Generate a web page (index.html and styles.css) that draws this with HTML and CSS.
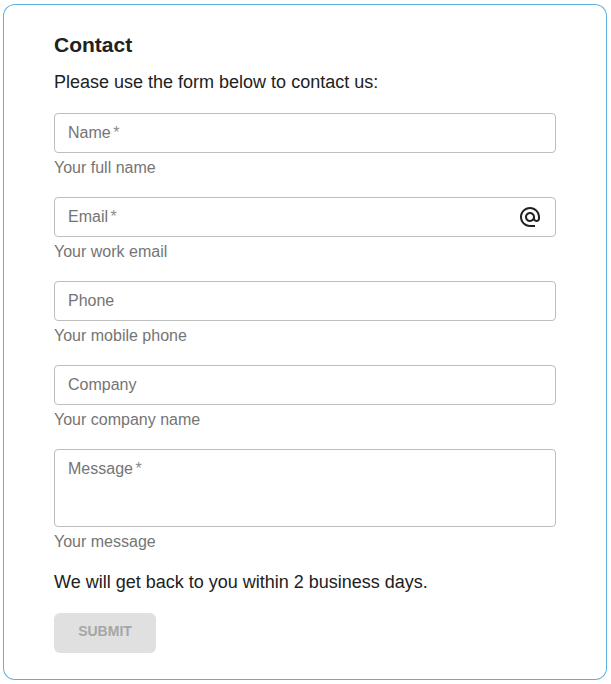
FILE: index.html
```html
<!DOCTYPE html>
<html lang="en">
<head>
<meta charset="utf-8">
<title>Contact</title>
<link rel="stylesheet" href="styles.css">
</head>
<body>
<form class="card">
  <h1 class="title">Contact</h1>
  <p class="text intro">Please use the form below to contact us:</p>
  <div class="field">
    <div class="box"><span class="ph">Name<span class="req">*</span></span></div>
    <div class="help">Your full name</div>
  </div>
  <div class="field">
    <div class="box"><span class="ph">Email<span class="req">*</span></span>
      <svg class="icon" viewBox="0 0 24 24" width="24" height="24" aria-hidden="true"><path fill="currentColor" d="M12 2C6.48 2 2 6.48 2 12s4.48 10 10 10h5v-2h-5c-4.34 0-8-3.66-8-8s3.66-8 8-8 8 3.66 8 8v1.43c0 .79-.71 1.57-1.5 1.57s-1.5-.78-1.5-1.57V12c0-2.76-2.24-5-5-5s-5 2.24-5 5 2.24 5 5 5c1.38 0 2.64-.56 3.54-1.47.65.89 1.77 1.47 2.96 1.47 1.97 0 3.5-1.6 3.5-3.57V12c0-5.52-4.48-10-10-10zm0 13c-1.66 0-3-1.34-3-3s1.34-3 3-3 3 1.34 3 3-1.34 3-3 3z"/></svg>
    </div>
    <div class="help">Your work email</div>
  </div>
  <div class="field">
    <div class="box"><span class="ph">Phone</span></div>
    <div class="help">Your mobile phone</div>
  </div>
  <div class="field">
    <div class="box"><span class="ph">Company</span></div>
    <div class="help">Your company name</div>
  </div>
  <div class="field">
    <div class="box area"><span class="ph">Message<span class="req">*</span></span></div>
    <div class="help">Your message</div>
  </div>
  <p class="text outro">We will get back to you within 2 business days.</p>
  <button class="submit" type="button" disabled>SUBMIT</button>
</form>
</body>
</html>
```
FILE: styles.css
```css
* { box-sizing: border-box; }
html, body { margin: 0; background: #fff; }
body {
  padding: 4px 4px 3px 3px;
  font-family: "Liberation Sans", Arial, sans-serif;
  color: #212121;
}
.card {
  width: 604px;
  height: 676px;
  padding: 26px 50px 0;
  border: 1px solid #5fb2e0;
  border-bottom-color: #6aa9cf;
  border-radius: 12px;
  display: flex;
  flex-direction: column;
  align-items: stretch;
}
.title {
  margin: 0;
  font-size: 21px;
  line-height: 28px;
  font-weight: 700;
}
.text { margin: 0; font-size: 18px; line-height: 24px; }
.intro { margin-top: 11px; margin-bottom: 19px; }
.field { display: flex; flex-direction: column; margin-bottom: 19px; }
.field:last-of-type { margin-bottom: 18px; }
.box {
  height: 40px;
  display: flex;
  align-items: center;
  justify-content: space-between;
  padding: 0 13px;
  border: 1px solid #bdbdbd;
  border-radius: 4px;
  background: #fff;
}
.area { height: 78px; align-items: flex-start; padding-top: 8px; }
.ph { font-size: 16px; line-height: 22px; color: #757575; }
.req { margin-left: 2.5px; color: #8a8a8a; }
.icon { width: 24px; height: 24px; color: #212121; margin-right: 0; }
.help { margin-top: 5px; font-size: 16px; line-height: 20px; color: #757575; }
.outro { margin-top: 0; margin-bottom: 19px; }
.submit {
  width: 102px;
  height: 40px;
  border: 0;
  border-radius: 6px;
  background: #e0e0e0;
  color: #a6a6a6;
  font: 700 14px "Liberation Sans", Arial, sans-serif;
  padding: 0 0 4px;
}
```
